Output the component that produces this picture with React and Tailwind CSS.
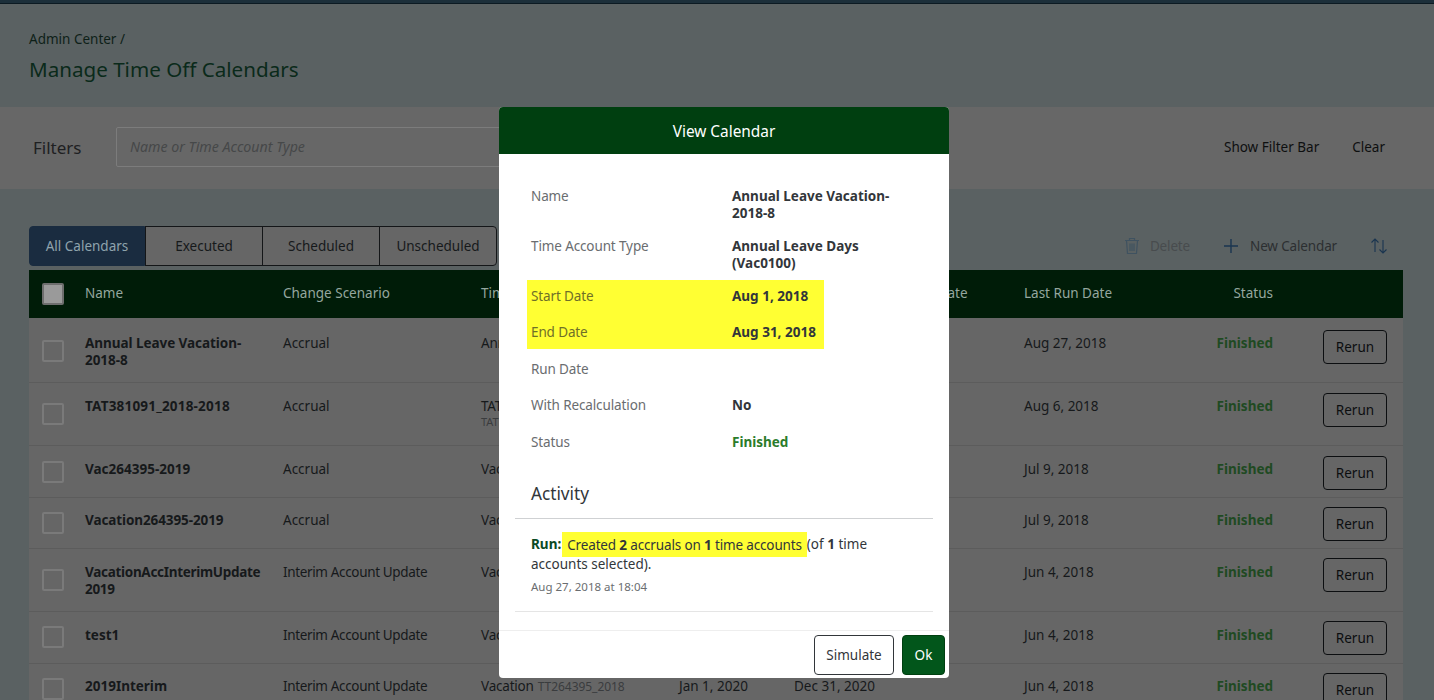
import React from "react";

const font = "font-['Noto_Sans','Open_Sans',sans-serif]";

const rows = [
  { name: ["Annual Leave Vacation-", "2018-8"], track: "tracking-[-0.05px]", scenario: "Accrual", acct: "Annual Leave", last: "Aug 27, 2018", h: "h-[65px]", top: "pt-[17px]", btn: "mt-[12px]", cb: "mt-[22px]" },
  { name: ["TAT381091_2018-2018"], track: "tracking-[0.2px]", scenario: "Accrual", acct: "TAT381091", sub: "TAT381091", last: "Aug 6, 2018", h: "h-[63px]", top: "pt-[15px]", btn: "mt-[10px]", cb: "mt-[20px]" },
  { name: ["Vac264395-2019"], track: "", scenario: "Accrual", acct: "Vacation", last: "Jul 9, 2018", h: "h-[52px]", top: "pt-[15px]", btn: "mt-[10px]", cb: "mt-[15px]" },
  { name: ["Vacation264395-2019"], track: "tracking-[-0.1px]", scenario: "Accrual", acct: "Vacation", last: "Jul 9, 2018", h: "h-[51px]", top: "pt-[14px]", btn: "mt-[9px]", cb: "mt-[14px]" },
  { name: ["VacationAccInterimUpdate", "2019"], track: "tracking-[-0.3px]", scenario: "Interim Account Update", acct: "Vacation", last: "Jun 4, 2018", h: "h-[63px]", top: "pt-[15px]", btn: "mt-[9px]", cb: "mt-[20px]" },
  { name: ["test1"], track: "", scenario: "Interim Account Update", acct: "Vacation", last: "Jun 4, 2018", h: "h-[52px]", top: "pt-[15px]", btn: "mt-[9px]", cb: "mt-[14px]" },
  { name: ["2019Interim"], track: "", scenario: "Interim Account Update", acct: "Vacation", sub2: "TT264395_2018", start: "Jan 1, 2020", end: "Dec 31, 2020", last: "Jun 4, 2018", h: "h-[60px]", top: "pt-[14px]", btn: "mt-[9px]", cb: "mt-[14px]" },
];

function Row({ r }) {
  return (
    <div className={`flex bg-[#666666] border-b border-[#5c5c5c] text-[13.5px] leading-[17px] text-[#16191b] ${r.h}`}>
      <div className={`w-[56px] shrink-0 pl-[13px] ${r.cb}`}>
        <div className="w-[22px] h-[22px] rounded-[2px] border-2 border-[#7a7a7a]" />
      </div>
      <div className={`w-[198px] shrink-0 font-bold ${r.track} ${r.top}`}>
        {r.name.map((n) => <div key={n} className="whitespace-nowrap">{n}</div>)}
      </div>
      <div className={`w-[198px] shrink-0 ${r.scenario.length > 10 ? "tracking-[-0.35px]" : ""} ${r.top}`}>{r.scenario}</div>
      <div className={`w-[198px] shrink-0 ${r.top} whitespace-nowrap`}>
        <span className="tracking-[-0.2px]">{r.acct}</span>
        {r.sub2 && <span className="ml-[4px] text-[12px] tracking-[-0.05px] text-[#3a3c3e]">{r.sub2}</span>}
        {r.sub && <div className="text-[11px] leading-[14px] text-[#3a3c3e]">{r.sub}</div>}
      </div>
      <div className={`w-[115px] shrink-0 ${r.top}`}>{r.start}</div>
      <div className={`w-[230px] shrink-0 ${r.top}`}>{r.end}</div>
      <div className={`w-[149px] shrink-0 ${r.top}`}>{r.last}</div>
      <div className={`w-[100px] shrink-0 text-right font-bold text-[#1f4a22] ${r.top}`}>Finished</div>
      <div className={`ml-[50px] ${r.btn}`}>
        <div className="w-[64px] h-[34px] rounded-[4px] border border-[#0c0e10] flex items-center justify-center text-[#0c0e10]">Rerun</div>
      </div>
    </div>
  );
}

function Tab({ children, active, cls }) {
  return (
    <div className={`h-[40px] flex items-center justify-center border text-[13.5px] ${active ? "bg-[#1a2c40] border-[#1a2c40] text-[#8fa3ad] rounded-l-[4px]" : "bg-[#666666] border-[#141618] text-[#16191b]"} ${cls}`}>
      {children}
    </div>
  );
}

function Field({ label, children, cls = "", labelCls = "text-[#6a6d70]" }) {
  return (
    <div className={`flex text-[13.5px] leading-[17px] ${cls}`}>
      <div className={`w-[201px] shrink-0 tracking-[-0.12px] ${labelCls}`}>{label}</div>
      <div className="w-[190px] font-bold text-[#32363a]">{children}</div>
    </div>
  );
}

export default function App() {
  return (
    <div className={`relative h-[700px] overflow-hidden bg-[#5a6162] ${font}`}>
      <div className="h-[4px] bg-[#1c2f3a] border-b border-[#0c1a22]" />
      <div className="px-[29px] pt-[27px] h-[103px]">
        <div className="text-[13.5px] leading-[17px] text-[#0e1f18]">Admin Center /</div>
        <div className="mt-[7px] text-[20.6px] leading-[28px] text-[#0a2a1a]">Manage Time Off Calendars</div>
      </div>
      <div className="h-[82px] bg-[#676767] flex items-start pt-[20px] pl-[33px] pr-[49px]">
        <div className="w-[83px] h-[40px] pt-[1px] flex items-center text-[17px] text-[#1e2022]">Filters</div>
        <div className="w-[600px] h-[40px] border border-[#7c7c7c] rounded-[2px] flex items-center pl-[13px] text-[14.2px] italic text-[#464849]">
          Name or Time Account Type
        </div>
        <div className="ml-auto h-[40px] flex items-center gap-[33px] text-[13.5px] text-[#0e0f10]">
          <span>Show Filter Bar</span>
          <span>Clear</span>
        </div>
      </div>
      <div className="pl-[29px] pr-[31px]">
        <div className="pt-[37px] flex items-start h-[81px]">
          <Tab active cls="w-[116px]">All Calendars</Tab>
          <Tab cls="w-[118px]">Executed</Tab>
          <Tab cls="w-[118px] -ml-[1px]">Scheduled</Tab>
          <Tab cls="w-[118px] -ml-[1px] rounded-r-[4px]">Unscheduled</Tab>
          <div className="ml-auto h-[40px] flex items-center text-[13.5px] pr-[15px]">
            <svg width="18" height="18" viewBox="0 0 18 18" fill="none" stroke="#3f5260" strokeWidth="1.2">
              <path d="M2 3.5h14M6.5 3.5V1.5h5v2M3.5 3.5l1 13h9l1-13M7 6.5v7.5M9 6.5v7.5M11 6.5v7.5" />
            </svg>
            <span className="ml-[9px] text-[#484c4e] tracking-[-0.15px]">Delete</span>
            <svg className="ml-[33px]" width="16" height="16" viewBox="0 0 16 16" fill="none" stroke="#1a3550" strokeWidth="1.4">
              <path d="M8 1v14M1 8h14" />
            </svg>
            <span className="ml-[11px] text-[#2c2f31] tracking-[-0.15px]">New Calendar</span>
            <svg className="ml-[33px]" width="18" height="18" viewBox="0 0 18 18" fill="none" stroke="#1a3550" strokeWidth="1.1">
              <path d="M5 15V2M1.5 5.5 5 2l3.5 3.5M13 3v13M9.5 12.5 13 16l3.5-3.5" />
            </svg>
          </div>
        </div>
        <div className="h-[48px] pb-[1px] bg-[#001c08] flex items-center text-[13.5px] text-[#95a79f]">
          <div className="w-[56px] shrink-0 pl-[13px]">
            <div className="w-[22px] h-[22px] rounded-[2px] border-2 border-[#6e6e6e] bg-[#9a9a9a]" />
          </div>
          <div className="w-[198px] shrink-0">Name</div>
          <div className="w-[198px] shrink-0">Change Scenario</div>
          <div className="w-[198px] shrink-0">Time Account Type</div>
          <div className="w-[115px] shrink-0">Start Date</div>
          <div className="w-[115px] shrink-0">End Date</div>
          <div className="w-[115px] shrink-0 whitespace-nowrap">Run Date</div>
          <div className="w-[149px] shrink-0">Last Run Date</div>
          <div className="w-[100px] shrink-0 text-right">Status</div>
        </div>
        {rows.map((r) => <Row key={r.name[0]} r={r} />)}
      </div>

      {/* Dialog */}
      <div className="absolute left-[499px] top-[107px] w-[450px] h-[571px] bg-white rounded-[4px] flex flex-col overflow-hidden">
        <div className="h-[47px] shrink-0 bg-[#003f10] text-white text-[15.4px] pt-[3px] flex items-center justify-center">View Calendar</div>
        <div className="flex-1 pt-[34px]">
          <div className="pl-[32px]">
            <Field label="Name">Annual Leave Vacation-<br />2018-8</Field>
            <Field label="Time Account Type" cls="mt-[16px]">Annual Leave Days<br />(Vac0100)</Field>
          </div>
          <div className="mt-[8px] ml-[28px] w-[297px] pl-[4px] py-[8px] bg-[#ffff33]">
            <Field label="Start Date" labelCls="text-[#6f6f28]">Aug 1, 2018</Field>
            <Field label="End Date" labelCls="text-[#6f6f28]" cls="mt-[19px]">Aug 31, 2018</Field>
          </div>
          <div className="pl-[32px]">
            <Field label="Run Date" cls="mt-[12px]" />
            <Field label="With Recalculation" cls="mt-[19px]">No</Field>
            <Field label="Status" cls="mt-[20px]"><span className="text-[#2b7c2b]">Finished</span></Field>
            <div className="mt-[31px] h-[24px] text-[17.2px] leading-[24px] text-[#32363a]">Activity</div>
          </div>
          <div className="mx-[16px] mt-[12px] border-t border-[#cfd1d3] pt-[15px] px-[16px] h-[93px]">
            <div className="w-[360px] text-[13.5px] leading-[20px] text-[#32363a]">
              <span className="font-bold text-[#0b4a24]">Run:</span>
              <span className="ml-[1px] bg-[#ffff33] px-[5px] py-[3.5px] tracking-[-0.15px]">
                Created <b>2</b> accruals on <b>1</b> time accounts
              </span>
              (of <b>1</b> time accounts selected).
            </div>
            <div className="mt-[5px] text-[11.5px] leading-[16px] text-[#6a6d70]">Aug 27, 2018 at 18:04</div>
          </div>
          <div className="mx-[16px] border-t border-[#e5e5e5]" />
        </div>
        <div className="h-[48px] shrink-0 border-t border-[#eeeeee] flex items-start justify-end pt-[4px] pr-[4px] gap-[8px] text-[13.5px]">
          <div className="w-[80px] h-[40px] rounded-[4px] border border-[#32363a] flex items-center justify-center text-[#32363a]">Simulate</div>
          <div className="w-[43px] h-[40px] rounded-[4px] border border-[#003f10] bg-[#02561b] flex items-center justify-center text-white">Ok</div>
        </div>
      </div>
    </div>
  );
}
